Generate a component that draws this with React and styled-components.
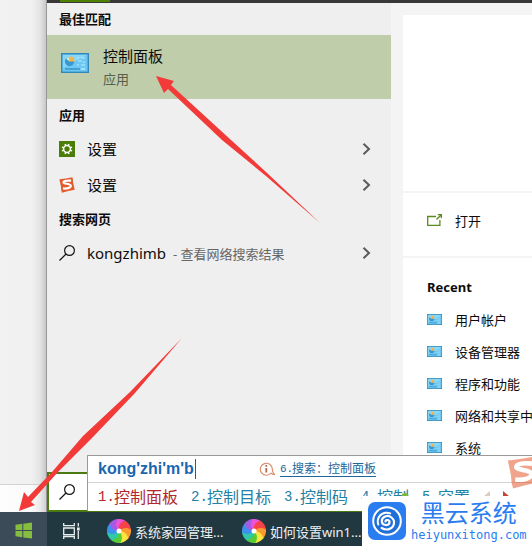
import React from "react";
import styled, { createGlobalStyle } from "styled-components";

const GlobalStyle = createGlobalStyle`
  *, *::before, *::after { box-sizing: border-box; }
  html, body { margin: 0; height: 100%; overflow: hidden; }
  #root { height: 100%; }
  body, button, input {
    font-family: "Noto Sans", "Noto Sans CJK SC", sans-serif;
    font-size: 13px;
    color: #0c0c0c;
  }
  button {
    border: 0;
    padding: 0;
    background: none;
    text-align: left;
    white-space: nowrap;
  }
  svg { display: block; flex: none; }
`;

const Screen = styled.div`
  position: relative;
  display: flex;
  flex-direction: column;
  height: 100vh;
  overflow: hidden;
  background: #f1f1f1;
`;

const Workspace = styled.main`
  flex: 1;
  display: flex;
  min-height: 0;
`;

const DesktopEdge = styled.div`
  flex: 0 0 46px;
  display: flex;
  flex-direction: column;
  justify-content: flex-end;
  background: linear-gradient(to right, #f2f2f2 0, #f0f0f0 32px, #e4e4e4 40px, #c8c8c8 46px);
`;

const DesktopFooter = styled.div`
  height: 28px;
  border-top: 1px solid #d2d2d2;
  background: linear-gradient(to right, #fdfdfd 0, #fafafa 32px, #eaeaea 40px, #d0d0d0 46px);
`;

const StartPanel = styled.section`
  position: relative;
  flex: 1;
  min-width: 0;
  display: flex;
  flex-direction: column;
  border-left: 1px solid #979797;
  background: #efefef;
`;

const TabStrip = styled.div`
  flex: none;
  height: 3px;
  padding-left: 13px;
  background: #383838;
`;

const ActiveTab = styled.div`
  width: 50px;
  height: 2px;
  background: #4d8000;
`;

const Columns = styled.div`
  flex: 1;
  display: flex;
  min-height: 0;
`;

const Results = styled.div`
  flex: 0 0 344px;
  display: flex;
  flex-direction: column;
`;

const GroupTitle = styled.h2`
  margin: 0;
  padding-left: 12px;
  font-size: 13px;
  font-weight: 700;
  line-height: 32px;
`;

const BestMatch = styled.button`
  display: flex;
  align-items: center;
  gap: 14px;
  height: 64px;
  padding-left: 14px;
  background: #c0cdab;
`;

const BestMatchIcon = styled.span`
  padding-bottom: 8px;
`;

const BestMatchText = styled.span`
  display: flex;
  flex-direction: column;
  font-size: 15px;
  line-height: 24px;
`;

const Caption = styled.span`
  font-size: 13px;
  line-height: 22px;
  color: #56604c;
`;

const ResultRow = styled.button`
  display: flex;
  align-items: center;
  gap: 12px;
  height: 36px;
  padding: 0 20px 0 12px;
  font-size: 15px;
`;

const ResultLabel = styled.span`
  flex: 1;
  padding-bottom: 1px;
`;

const Hint = styled.span`
  padding-left: 3px;
  font-size: 13px;
  color: #666;
`;

const SearchBox = styled.label`
  display: flex;
  align-items: center;
  gap: 12px;
  height: 40px;
  margin-top: auto;
  padding: 0 10px;
  border: 2px solid #4b7a10;
  background: #fff;
`;

const SearchInput = styled.input`
  flex: 1;
  min-width: 0;
  border: 0;
  outline: 0;
  background: transparent;
`;

const Details = styled.aside`
  flex: 1;
  min-width: 0;
  display: flex;
  flex-direction: column;
  gap: 2px;
  padding: 12px 0 0 12px;
  background: #f4f4f4;
`;

const Preview = styled.div`
  height: 176px;
  background: #fff;
`;

const OpenPane = styled.div`
  height: 63px;
  padding: 11px 24px;
  background: #fff;
`;

const DetailButton = styled.button`
  display: flex;
  align-items: center;
  gap: 13px;
  height: 32px;
`;

const RecentPane = styled.div`
  flex: 1;
  min-height: 0;
  overflow: hidden;
  padding: 14px 0 0 24px;
  background: #fff;
`;

const RecentTitle = styled.h3`
  margin: 0 0 1px;
  font-size: 13px;
  font-weight: 700;
  line-height: 30px;
`;

const ImeWindow = styled.div`
  position: absolute;
  left: 40px;
  right: 0;
  bottom: 1px;
  height: 56px;
  overflow: hidden;
  border: 1px solid #9a9a9a;
  border-right: 0;
  border-bottom: 0;
  background: #fff;
`;

const Composition = styled.div`
  display: flex;
  align-items: center;
  justify-content: space-between;
  height: 27px;
  padding: 0 156px 0 10px;
  border-bottom: 1px solid #d4d4d4;
`;

const Typed = styled.span`
  padding-right: 1px;
  border-right: 1px solid #b3282d;
  font: bold 16px/20px "Liberation Sans", sans-serif;
  color: #1a66ae;
`;

const Suggestion = styled.span`
  display: flex;
  align-items: center;
  gap: 5px;
`;

const SuggestionLink = styled.a`
  display: flex;
  font-size: 12px;
  line-height: 14px;
  color: #1c6798;
  text-decoration: none;
  border-bottom: 1px solid #1c6798;
`;

const Candidates = styled.div`
  display: flex;
  align-items: center;
  gap: 13px;
  height: 28px;
  padding-left: 10px;
`;

const Candidate = styled.button`
  display: flex;
  align-items: center;
  font-size: 16px;
  line-height: 24px;
  color: ${(p) => (p.$first ? "#b3282d" : "#2381a3")};
`;

const Digit = styled.span`
  width: ${(p) => p.$width}px;
  font-family: "Liberation Mono", monospace;
  font-size: ${(p) => p.$size}px;
`;

const PageButton = styled.button`
  color: ${(p) => (p.$active ? "#c8402f" : "#ddc9c0")};
`;

const ImeLogo = styled.div`
  position: absolute;
  right: -8px;
  bottom: 57px;
  opacity: 0.55;
`;

const Taskbar = styled.nav`
  flex: none;
  display: flex;
  height: 34px;
  background: #213841;
`;

const StartButton = styled.button`
  display: grid;
  place-items: center;
  width: 47px;
  padding-top: 3px;
  background: #3b4c58;
`;

const TaskViewButton = styled.button`
  display: grid;
  place-items: center;
  width: 48px;
  padding-top: 4px;
`;

const TaskButton = styled.button`
  display: flex;
  align-items: center;
  gap: 4px;
  width: 135px;
  padding: 4px 0 0 12px;
  color: #eef1f2;
`;

const Watermark = styled.div`
  position: absolute;
  right: 0;
  bottom: 0;
  display: flex;
  align-items: center;
  gap: 5px;
  width: 170px;
  height: 50px;
  padding-left: 6px;
  background: #fff;
  color: #2a7df0;
`;

const BrandText = styled.div`
  display: flex;
  flex-direction: column;
  align-items: center;
`;

const BrandName = styled.strong`
  font-size: 24px;
  font-weight: 400;
  line-height: 28px;
`;

const BrandUrl = styled.span`
  font-family: "DejaVu Sans Mono", monospace;
  font-size: 12px;
  line-height: 16px;
`;

const Leaf = styled.svg`
  position: absolute;
  right: 123px;
  bottom: 50px;
`;

const Arrows = styled.svg`
  position: absolute;
  left: 0;
  top: 0;
  pointer-events: none;
`;

function ControlPanelIcon({ width, height }) {
  return (
    <svg width={width} height={height} viewBox="0 0 28 20" preserveAspectRatio="none">
      <rect x=".7" y=".7" width="26.6" height="18.6" fill="#6cc8f2" stroke="#3288b8" strokeWidth="1.4" />
      <path d="M2 2h24L2 15z" fill="#96dcf8" opacity=".7" />
      <circle cx="8.5" cy="8.5" r="4.6" fill="#3a97d0" />
      <path d="M8.5 8.5V3.3a5 5 0 0 1 5.1 5.2z" fill="#f5b545" />
      <path d="M5 5.400A4.600 4.600 0 0 1 8.500 3.900v4.600z" fill="#d5ecd8" />
      <path d="M16 5h2M20 5h4M17 8h4M22 9h2M16 12h2M20 12h4" stroke="#b9ecfc" strokeWidth="1.100" />
      <path d="M4 16h15" stroke="#2884b8" strokeWidth="1.100" />
      <path d="M20 16h4" stroke="#d7f6ff" strokeWidth="1.100" />
    </svg>
  );
}

function GearIcon() {
  return (
    <svg width="16" height="16" viewBox="0 0 16 16">
      <rect width="16" height="16" fill="#4a7e08" />
      <g stroke="#fff" fill="none">
        <circle cx="8" cy="8" r="3.4" strokeWidth="1.5" />
        <path
          d="M6.8 4.8L6.1 2.9M9.2 4.8l.7-1.9M6.8 11.2l-.7 1.9M9.2 11.2l.7 1.9M4.8 6.8l-1.9-.7M4.8 9.2l-1.9.7M11.2 6.8l1.9-.7M11.2 9.2l1.9.7"
          strokeWidth="1.5"
        />
      </g>
    </svg>
  );
}

function SogouIcon({ size }) {
  return (
    <svg width={size} height={size} viewBox="0 0 16 16">
      <path d="M.4 2.2Q7 1.5 13.4.2q.8 2.6.7 5.2l1.6 7.4Q9.4 13.7 3 15.8 1.9 13 2 9.7z" fill="#e35a2d" />
      <path
        d="M12.1 3.7Q5.3 3.1 4.5 5.1c-.5 2 7 1.3 7.3 3.6.2 2.5-4.6 3.1-7.8 2.7"
        fill="none"
        stroke="#fff"
        strokeWidth="2.2"
      />
    </svg>
  );
}

function SearchIcon() {
  return (
    <svg width="16" height="16" viewBox="0 0 16 16" fill="none" stroke="#161616" strokeWidth="1.2">
      <circle cx="10.5" cy="5.5" r="4.9" />
      <path d="M7 9L.5 15.5" />
    </svg>
  );
}

function Chevron() {
  return (
    <svg width="9" height="12" viewBox="0 0 9 12" fill="none" stroke="#5b5b5b" strokeWidth="2">
      <path d="M1.5 .8L7 6l-5.5 5.2" />
    </svg>
  );
}

function OpenIcon() {
  return (
    <svg width="15" height="12" viewBox="0 0 15 12" fill="none" stroke="#5b8a1c" strokeWidth="1.3">
      <path d="M9 2.5H.7v8.800h12.200V6M9.500 5.500L14 1M10.800 .700h3.600v3.600" />
    </svg>
  );
}

function InfoIcon() {
  return (
    <svg width="16" height="14" viewBox="0 0 16 14" fill="none" stroke="#dc8c68" strokeWidth="1.2">
      <path d="M12 11A6 6 0 1 1 13.300 7c0 2.500.500 4 2.200 5.400-1.500.200-2.600-.300-3.500-1.400" />
      <path d="M7.300 3v1.800M7.300 6v4.500" stroke="#b56b4a" strokeWidth="1.800" />
    </svg>
  );
}

function PageArrow({ flip }) {
  return (
    <svg width="7" height="12" viewBox="0 0 7 12" fill="currentColor">
      <path d={flip ? "M0 0l7 6-7 6z" : "M7 0L0 6l7 6z"} />
    </svg>
  );
}

function WindowsIcon() {
  return (
    <svg width="18" height="17" viewBox="0 0 18 17" fill="#87bd3e">
      <path d="M.500 2.800L7.300 1.800V8H.500zM8.300 1.700L17 .400V8H8.300zM.500 9h6.800v6.200L.500 14.200zM8.300 9H17v7.600l-8.700-1.200z" />
    </svg>
  );
}

function TaskViewIcon() {
  return (
    <svg width="17" height="16" viewBox="0 0 17 16" fill="none" stroke="#e8edef" strokeWidth="1.3">
      <path d="M.7 0v2.600h10.600V0M.7 5h10.600v6.600H.7zM.7 16v-2.500h10.600V16M15.300 0v3.500M15.300 8v8" />
      <path d="M14 4.500h2.700v3H14z" fill="#e8edef" stroke="none" />
    </svg>
  );
}

const petals = ["#ee52d6", "#a35be3", "#3c91ee", "#30c8a8", "#58cc35", "#fae43f", "#fb9b2d", "#f6434a"];

function BrowserIcon() {
  return (
    <svg width="24" height="24" viewBox="0 0 24 24">
      <circle cx="12" cy="12" r="9" fill="#f0a050" />
      {petals.map((fill, i) => (
        <path
          key={fill}
          d="M12 12C7.500 9.500 6.500 4.500 9.300.300A11.900 11.900 0 0 1 19.500 2.700C15 3.500 12 7 12 12z"
          fill={fill}
          transform={`rotate(${i * -45} 12 12)`}
        />
      ))}
      <circle cx="12" cy="12" r="2.500" fill="#fff" />
    </svg>
  );
}

function BrandLogo() {
  return (
    <svg width="38" height="38" viewBox="0 0 38 38" fill="none">
      <rect width="38" height="38" rx="7" fill="#2a7df0" />
      <circle cx="19" cy="19" r="14.800" fill="#fff" />
      <circle cx="19" cy="19" r="12.800" fill="#1f6fd8" />
      <g stroke="#fff" strokeLinecap="round">
        <path
          d="M17.500 19.500c0-2.300 4.500-2 4 1.200-.600 3.400-7.400 3.300-7.700-1.500-.200-4.700 5.800-6.800 9.700-3.700 4.600 3.700 2.600 10.600-3 11.800-2.600.500-5-.100-6.900-1.300"
          strokeWidth="2.200"
        />
        <path d="M10.300 22.500c-1.900-5.500 1.500-11 7.200-11.700 1.700-.200 3.300 0 4.700.600" strokeWidth="2" />
      </g>
    </svg>
  );
}

const recent = ["用户帐户", "设备管理器", "程序和功能", "网络和共享中心", "系统"];
const candidates = ["控制面板", "控制目标", "控制码", "控制", "空置"];

export default function App() {
  return (
    <>
      <GlobalStyle />
      <Screen>
        <Workspace>
          <DesktopEdge>
            <DesktopFooter />
          </DesktopEdge>
          <StartPanel>
            <TabStrip>
              <ActiveTab />
            </TabStrip>
            <Columns>
              <Results>
                <GroupTitle>最佳匹配</GroupTitle>
                <BestMatch>
                  <BestMatchIcon>
                    <ControlPanelIcon width={28} height={20} />
                  </BestMatchIcon>
                  <BestMatchText>
                    控制面板
                    <Caption>应用</Caption>
                  </BestMatchText>
                </BestMatch>
                <GroupTitle>应用</GroupTitle>
                <ResultRow>
                  <GearIcon />
                  <ResultLabel>设置</ResultLabel>
                  <Chevron />
                </ResultRow>
                <ResultRow>
                  <SogouIcon size={16} />
                  <ResultLabel>设置</ResultLabel>
                  <Chevron />
                </ResultRow>
                <GroupTitle>搜索网页</GroupTitle>
                <ResultRow>
                  <SearchIcon />
                  <ResultLabel>
                    kongzhimb <Hint>- 查看网络搜索结果</Hint>
                  </ResultLabel>
                  <Chevron />
                </ResultRow>
                <SearchBox>
                  <SearchIcon />
                  <SearchInput type="text" aria-label="搜索" />
                </SearchBox>
              </Results>
              <Details>
                <Preview />
                <OpenPane>
                  <DetailButton>
                    <OpenIcon />
                    打开
                  </DetailButton>
                </OpenPane>
                <RecentPane>
                  <RecentTitle>Recent</RecentTitle>
                  {recent.map((name) => (
                    <DetailButton key={name}>
                      <ControlPanelIcon width={15} height={11} />
                      {name}
                    </DetailButton>
                  ))}
                </RecentPane>
              </Details>
            </Columns>
            <ImeWindow>
              <Composition>
                <Typed>kong'zhi'm'b</Typed>
                <Suggestion>
                  <InfoIcon />
                  <SuggestionLink href="#search">
                    <Digit $width={12} $size={11}>6.</Digit>搜索：控制面板
                  </SuggestionLink>
                </Suggestion>
              </Composition>
              <Candidates>
                {candidates.map((word, i) => (
                  <Candidate key={word} $first={i === 0}>
                    <Digit $width={16} $size={14}>{i + 1}.</Digit>
                    {word}
                  </Candidate>
                ))}
                <PageButton aria-label="上一页">
                  <PageArrow />
                </PageButton>
                <PageButton $active aria-label="下一页">
                  <PageArrow flip />
                </PageButton>
              </Candidates>
            </ImeWindow>
          </StartPanel>
        </Workspace>
        <Taskbar>
          <StartButton aria-label="开始">
            <WindowsIcon />
          </StartButton>
          <TaskViewButton aria-label="任务视图">
            <TaskViewIcon />
          </TaskViewButton>
          <TaskButton>
            <BrowserIcon />
            系统家园管理...
          </TaskButton>
          <TaskButton>
            <BrowserIcon />
            如何设置win1...
          </TaskButton>
        </Taskbar>
        <Watermark>
          <BrandLogo />
          <BrandText>
            <BrandName>黑云系统</BrandName>
            <BrandUrl>heiyunxitong.com</BrandUrl>
          </BrandText>
        </Watermark>
        <Leaf width="8" height="4" viewBox="0 0 8 4" fill="#7cb83a">
          <path d="M0 4l2-3 1 1 1-2 2 2 2 2z" />
        </Leaf>
        <ImeLogo>
          <SogouIcon size={33} />
        </ImeLogo>
        <Arrows width="330" height="520" viewBox="0 0 330 520" fill="#f23b38">
          <path d="M156 76l18 5-3 4 60 55 35 32 54 51-54-47-44-36-54-51-4 4z" />
          <path d="M19 511l5-19 4 5 24-25 31-36 47-44 52-54-47 55-43 45-34 34-27 30 4 3z" />
        </Arrows>
      </Screen>
    </>
  );
}
